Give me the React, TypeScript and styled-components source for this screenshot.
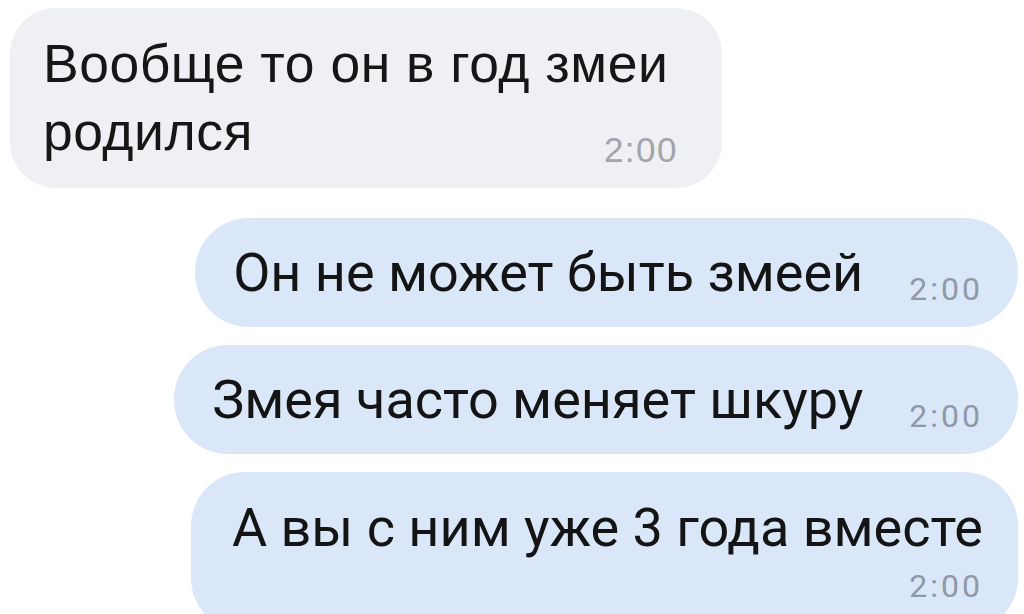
import React from "react";
import styled, { createGlobalStyle } from "styled-components";

const Global = createGlobalStyle`
  html, body { margin: 0; padding: 0; background: #ffffff; overflow: hidden; }
  body { width: 1024px; height: 614px; }
`;

const Chat = styled.div`
  display: flex;
  flex-direction: column;
  padding: 8px 6px 0 10px;
  gap: 18px;
  box-sizing: border-box;
  width: 1024px;
`;

const Incoming = styled.div`
  display: flex;
  flex-direction: column;
  align-self: flex-start;
  box-sizing: border-box;
  width: 712px;
  height: 180px;
  padding: 22px 44px 21px 33px;
  margin-bottom: 12px;
  background: #eef0f4;
  border-radius: 46px;
`;

const IncomingLine = styled.div`
  display: flex;
  justify-content: space-between;
  align-items: flex-end;
`;

const IncomingText = styled.span`
  font-family: "Liberation Sans", Arial, sans-serif;
  font-size: 53.5px;
  letter-spacing: 0.5px;
  line-height: 68px;
  color: #161616;
  white-space: nowrap;
`;

const IncomingTime = styled.span`
  margin-bottom: -1px;
  font-family: "Liberation Sans", Arial, sans-serif;
  font-size: 35px;
  line-height: 35px;
  letter-spacing: 1.5px;
  color: #a2a4a8;
`;

const Outgoing = styled.div<{ $stacked?: boolean }>`
  display: flex;
  flex-direction: ${(p) => (p.$stacked ? "column" : "row")};
  align-items: flex-end;
  align-self: flex-end;
  box-sizing: border-box;
  padding: ${(p) => (p.$stacked ? "29px 35px 30px 41px" : "28px 35px 22px 38px")};
  gap: ${(p) => (p.$stacked ? "15px" : "46px")};
  background: #d9e7f9;
  border-radius: 54px;
`;

const OutgoingText = styled.div<{ $stacked?: boolean }>`
  font-family: Roboto, "Liberation Sans", sans-serif;
  font-size: 54px;
  line-height: 54px;
  color: #141414;
  white-space: nowrap;
  margin-bottom: ${(p) => (p.$stacked ? "0" : "5px")};
  align-self: ${(p) => (p.$stacked ? "flex-start" : "auto")};
`;

const OutgoingTime = styled.span`
  font-family: Roboto, "Liberation Sans", sans-serif;
  font-size: 32px;
  line-height: 32px;
  letter-spacing: 3px;
  color: #8f99a7;
  white-space: nowrap;
`;

export default function App() {
  return (
    <>
      <Global />
      <Chat>
        <Incoming>
          <IncomingLine>
            <IncomingText>Вообще то он в год змеи</IncomingText>
          </IncomingLine>
          <IncomingLine>
            <IncomingText>родился</IncomingText>
            <IncomingTime>2:00</IncomingTime>
          </IncomingLine>
        </Incoming>
        <Outgoing>
          <OutgoingText>Он не может быть змеей</OutgoingText>
          <OutgoingTime>2:00</OutgoingTime>
        </Outgoing>
        <Outgoing>
          <OutgoingText>Змея часто меняет шкуру</OutgoingText>
          <OutgoingTime>2:00</OutgoingTime>
        </Outgoing>
        <Outgoing $stacked>
          <OutgoingText $stacked>А вы с ним уже 3 года вместе</OutgoingText>
          <OutgoingTime>2:00</OutgoingTime>
        </Outgoing>
      </Chat>
    </>
  );
}
